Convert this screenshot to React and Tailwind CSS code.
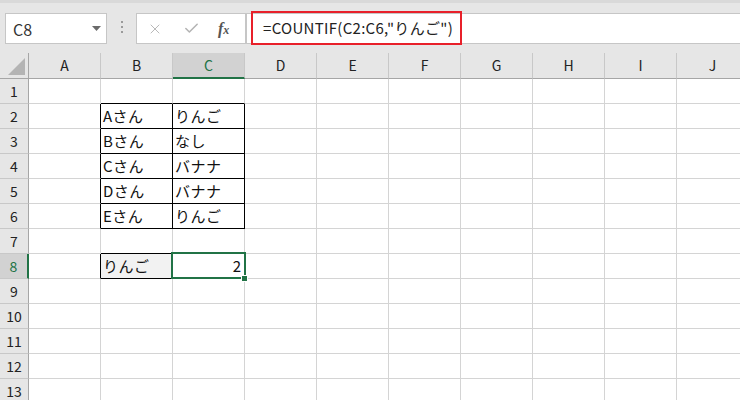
import { X, Check } from "lucide-react";

const cols = ["A", "B", "C", "D", "E", "F", "G", "H", "I", "J"];
const rowCount = 13;

const data = {
  "2-B": "Aさん",
  "2-C": "りんご",
  "3-B": "Bさん",
  "3-C": "なし",
  "4-B": "Cさん",
  "4-C": "バナナ",
  "5-B": "Dさん",
  "5-C": "バナナ",
  "6-B": "Eさん",
  "6-C": "りんご",
  "8-B": "りんご",
};

// cells that carry a black outline
const inBox = (r, c) =>
  ((r >= 2 && r <= 6) || r === 8) && (c === "B" || c === "C");

const font = { fontFamily: '"Noto Sans CJK JP", "Noto Sans", sans-serif' };

function Cell({ r, c, i }) {
  const next = cols[i + 1];
  const right = inBox(r, c) || inBox(r, next);
  const bottom = inBox(r, c) || inBox(r + 1, c);
  const text = data[`${r}-${c}`];
  const isC8 = r === 8 && c === "C";
  return (
    <div
      className={
        "relative flex h-full w-[72px] shrink-0 items-center border-r border-b px-[2px] text-[15px] text-[#111] " +
        (right ? "border-r-black " : "border-r-[#d4d4d4] ") +
        (bottom ? "border-b-black " : "border-b-[#d4d4d4] ") +
        (r === 8 && c === "B" ? "bg-[#f2f2f2]" : "bg-white")
      }
    >
      {text && <span className="pt-[1px] tracking-[0.5px]">{text}</span>}
      {isC8 && (
        <>
          <span className="ml-auto pr-[1px] pt-[1px]">2</span>
          <div className="absolute -left-[2px] -top-[2px] z-10 h-[27px] w-[75px] border-2 border-[#217346]" />
          <div className="absolute -bottom-[4px] -right-[4px] z-20 h-[7px] w-[7px] border border-white bg-[#217346]" />
        </>
      )}
    </div>
  );
}

export default function App() {
  return (
    <div className="h-[400px] w-[740px] overflow-hidden bg-white" style={font}>
      {/* ribbon / formula bar */}
      <div className="flex h-[53px] items-start border-t-[3px] border-[#d9d9d9] bg-[#e6e6e6] pt-[10px]">
        <div className="ml-[5px] flex h-[31px] w-[102px] items-center justify-between border border-[#c6c6c6] bg-white pl-[7px] pr-[5px] text-[16px] text-[#333]">
          <span>C8</span>
          <svg width="9" height="5" viewBox="0 0 9 5">
            <path d="M0 0 H9 L4.5 5 Z" fill="#6b6b6b" />
          </svg>
        </div>
        <div className="ml-[14px] mt-[8px] flex flex-col gap-[3px]">
          <div className="h-[2px] w-[2px] bg-[#9a9a9a]" />
          <div className="h-[2px] w-[2px] bg-[#9a9a9a]" />
          <div className="h-[2px] w-[2px] bg-[#9a9a9a]" />
        </div>
        <div className="ml-[13px] flex h-[31px] w-[110px] items-center border border-[#c6c6c6] bg-white">
          <X size={16} strokeWidth={1.4} className="ml-[10px] text-[#b4b4b4]" />
          <Check size={17} strokeWidth={2.2} className="ml-[20px] text-[#b4b4b4]" />
          <span
            className="ml-[18px] text-[16px] font-bold italic text-[#555]"
            style={{ fontFamily: '"Liberation Serif", serif' }}
          >
            f<span className="text-[12px]">x</span>
          </span>
        </div>
        <div className="relative flex h-[31px] flex-1 items-center border-y border-l border-[#c6c6c6] bg-white pl-[16px] text-[15px] text-[#222]">
          <span className="tracking-[0.3px]">=COUNTIF(C2:C6,"りんご")</span>
          <div className="absolute -top-[3px] left-[4px] z-10 h-[34px] w-[211px] border-2 border-[#e8202a]" />
        </div>
      </div>

      {/* column header */}
      <div className="flex h-[26px] bg-[#e6e6e6] text-[14px] text-[#222]">
        <div className="flex h-full w-[29px] shrink-0 items-end justify-end border-r border-b border-[#a6a6a6] pb-[3px] pr-[3px]">
          <svg width="17" height="17" viewBox="0 0 17 17">
            <path d="M17 0 V17 H0 Z" fill="#b4b4b4" />
          </svg>
        </div>
        {cols.map((c) => (
          <div
            key={c}
            className={
              "flex h-full w-[72px] shrink-0 items-center justify-center border-r border-r-[#c8c8c8] " +
              (c === "C"
                ? "border-b-2 border-b-[#217346] bg-[#d2d2d2] text-[#217346]"
                : "border-b border-b-[#a6a6a6]")
            }
          >
            {c}
          </div>
        ))}
      </div>

      {/* rows */}
      {Array.from({ length: rowCount }, (_, k) => k + 1).map((r) => (
        <div key={r} className="flex h-[25px]">
          <div
            className={
              "flex h-full w-[29px] shrink-0 items-center justify-center border-b border-b-[#c8c8c8] text-[14px] " +
              (r === 8
                ? "border-r-2 border-r-[#217346] bg-[#d2d2d2] text-[#217346]"
                : "border-r border-r-[#a6a6a6] bg-[#e6e6e6] text-[#222]")
            }
          >
            {r}
          </div>
          {cols.map((c, i) => (
            <Cell key={c} r={r} c={c} i={i} />
          ))}
        </div>
      ))}
    </div>
  );
}
